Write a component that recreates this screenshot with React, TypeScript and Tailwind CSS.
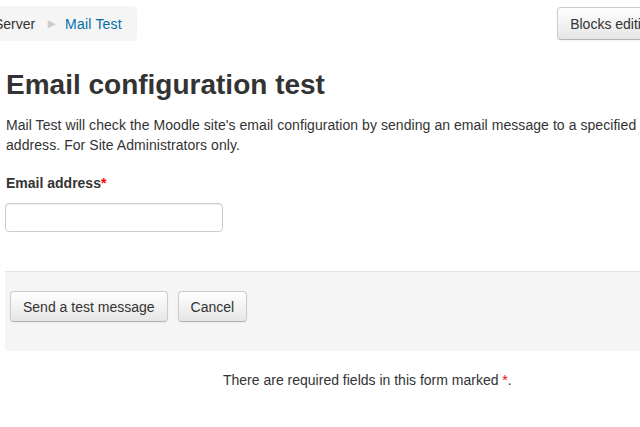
import React from "react";

const App = () => {
  return (
    <main className="w-[640px] h-[427px] overflow-hidden bg-white text-[#333] text-[14px] leading-[20px] font-['Liberation_Sans',Arial,sans-serif]">
      <div className="flex items-start justify-between pt-[6px]">
        <nav className="flex items-center h-[35px] -ml-[21px] pl-[15px] pr-[15px] bg-[#f5f5f5] rounded-[4px]">
          <span>Server</span>
          <span className="ml-[10px] mr-[7px] text-[#ccc] text-[13px]">►</span>
          <a className="text-[#0070a8] tracking-[0.2px]">Mail Test</a>
        </nav>
        <button className="mt-[1px] -mr-[49px] h-[33px] px-[12px] border border-[#ccc] border-b-[#b3b3b3] rounded-[4px] bg-gradient-to-b from-white to-[#e6e6e6] shadow-[inset_0_1px_0_rgba(255,255,255,.2),0_1px_2px_rgba(0,0,0,.05)] text-[#333]">
          Blocks editing on
        </button>
      </div>

      <div className="pl-[5px]">
        <h2 className="mt-[24px] ml-[1px] text-[28px] leading-[40px] font-bold text-[#333]">
          Email configuration test
        </h2>
        <p className="mt-[10px] ml-[1px] w-[640px] tracking-[0.06px]">
          Mail Test will check the Moodle site's email configuration by sending an email message to a specified
          <br />
          address. For Site Administrators only.
        </p>

        <label className="block mt-[18px] ml-[1px] font-bold">
          Email address<span className="text-[#ff0000]">*</span>
        </label>
        <input
          type="text"
          className="block mt-[10px] w-[218px] h-[29px] border border-[#ccc] rounded-[4px] bg-white shadow-[inset_0_1px_1px_rgba(0,0,0,.075)] outline-none px-[6px]"
        />

        <div className="mt-[39px] h-[80px] border-t border-[#e5e5e5] bg-[#f5f5f5] pt-[19px] pl-[5px] flex gap-[10px] items-start">
          <button className="h-[31px] px-[12px] border border-[#ccc] border-b-[#b3b3b3] rounded-[4px] bg-gradient-to-b from-white to-[#e6e6e6] shadow-[0_1px_2px_rgba(0,0,0,.05)] text-[#333]">
            Send a test message
          </button>
          <button className="h-[31px] px-[12px] border border-[#ccc] border-b-[#b3b3b3] rounded-[4px] bg-gradient-to-b from-white to-[#e6e6e6] shadow-[0_1px_2px_rgba(0,0,0,.05)] text-[#333]">
            Cancel
          </button>
        </div>

        <p className="mt-[19px] ml-[218px]">
          There are required fields in this form marked <span className="text-[#ff0000]">*</span>.
        </p>
      </div>
    </main>
  );
};

export default App;
